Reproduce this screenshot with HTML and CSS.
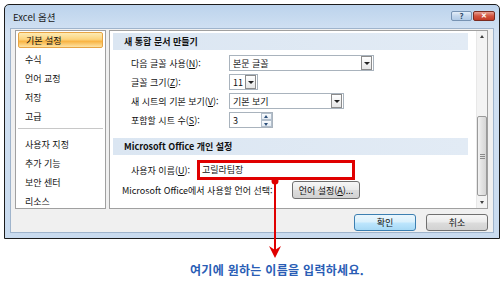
FILE: index.html
```html
<!DOCTYPE html>
<html lang="ko">
<head>
    <meta charset="UTF-8">
    <meta name="viewport" content="width=device-width, initial-scale=1.0">
    <title>Excel 옵션</title>
    <link rel="stylesheet" href="styles.css">
</head>
<body>

    <div class="dialog">
        <div class="titlebar">
            <span class="title">Excel 옵션</span>
            <div class="caption-buttons">
                <span class="cap-btn help">?</span>
                <span class="cap-btn close">✕</span>
            </div>
        </div>

        <div class="client">
            <div class="body-row">
                <ul class="nav">
                    <li class="active">기본 설정</li>
                    <li>수식</li>
                    <li>언어 교정</li>
                    <li>저장</li>
                    <li>고급</li>
                    <li class="sep"></li>
                    <li>사용자 지정</li>
                    <li>추가 기능</li>
                    <li>보안 센터</li>
                    <li>리소스</li>
                </ul>

                <div class="panel">
                    <div class="panel-content">
                        <div class="section-head">새 통합 문서 만들기</div>

                        <div class="row">
                            <span class="label">다음 글꼴 사용(<u>N</u>):</span>
                            <div class="combo combo-font"><span class="value">본문 글꼴</span><i class="drop"></i></div>
                        </div>
                        <div class="row">
                            <span class="label">글꼴 크기(<u>Z</u>):</span>
                            <div class="combo combo-size"><span class="value">11</span><i class="drop"></i></div>
                        </div>
                        <div class="row">
                            <span class="label">새 시트의 기본 보기(<u>V</u>):</span>
                            <div class="combo combo-view"><span class="value">기본 보기</span><i class="drop"></i></div>
                        </div>
                        <div class="row">
                            <span class="label">포함할 시트 수(<u>S</u>):</span>
                            <div class="spin"><span class="value">3</span>
                                <div class="spin-btns"><i class="up"></i><i class="down"></i></div>
                            </div>
                        </div>

                        <div class="section-head second">Microsoft Office 개인 설정</div>

                        <div class="row user-row">
                            <span class="label short">사용자 이름(<u>U</u>):</span>
                            <div class="name-input">고릴라팀장</div>
                        </div>
                        <div class="row lang-row">
                            <span class="lang-label">Microsoft Office에서 사용할 언어 선택:</span>
                            <button class="btn lang-btn">언어 설정(<u>A</u>)...</button>
                        </div>
                    </div>

                    <div class="scrollbar">
                        <i class="sb-arrow sb-up"></i>
                        <div class="sb-track"><div class="sb-thumb"><span class="grip"></span></div></div>
                        <i class="sb-arrow sb-down"></i>
                    </div>
                </div>
            </div>

            <div class="footer">
                <button class="btn default">확인</button>
                <button class="btn">취소</button>
            </div>
        </div>
    </div>

    <!-- callout arrow over the dialog -->
    <svg class="callout" width="504" height="281" viewBox="0 0 504 281">
        <line x1="275" y1="181" x2="275" y2="252" stroke="#e00000" stroke-width="2"/>
        <circle cx="275" cy="181" r="3.5" fill="#e00000"/>
        <polygon points="269,246 275,250 281,246 275,258" fill="#e00000"/>
    </svg>

    <p class="hint">여기에 원하는 이름을 입력하세요.</p>

</body>
</html>
```

FILE: styles.css
```css
/* Global */
* {
    margin: 0;
    padding: 0;
    box-sizing: border-box;
}

body {
    background: #ffffff;
    font-family: 'Noto Sans CJK KR', 'Noto Sans', sans-serif;
    font-size: 9px;
    color: #111111;
    position: relative;
    width: 504px;
    height: 281px;
    overflow: hidden;
}

u {
    text-decoration: underline;
    text-underline-offset: 1px;
}

/* Window frame */
.dialog {
    margin: 4px 0 0 4px;
    width: 496px;
    height: 235px;
    border: 1px solid #1c1c1c;
    border-radius: 5px 5px 0 0;
    background: linear-gradient(180deg, #bcd3ec 0%, #d3e2f3 12%, #c9dbef 100%);
    padding: 0 5px 5px 5px;
    display: flex;
    flex-direction: column;
}

.titlebar {
    height: 23px;
    display: flex;
    align-items: center;
    justify-content: space-between;
    padding: 0 0 0 3px;
}

.title {
    font-size: 9.5px;
    color: #1a1a1a;
    margin-top: 1px;
}

.caption-buttons {
    display: flex;
    gap: 1px;
    margin-top: -2px;
    margin-right: -1px;
}

.cap-btn {
    height: 10px;
    border-radius: 2px;
    display: flex;
    align-items: center;
    justify-content: center;
    font-size: 8px;
    font-weight: bold;
    line-height: 1;
}

.cap-btn.help {
    width: 21px;
    background: linear-gradient(180deg, #e4eef9 0%, #c4d7ec 50%, #b2cbe6 100%);
    border: 1px solid #7793b3;
    color: #2f4a6a;
}

.cap-btn.close {
    width: 22px;
    background: linear-gradient(180deg, #e8a093 0%, #d2533f 50%, #c23a26 100%);
    border: 1px solid #7a2b20;
    color: #ffffff;
    font-size: 7px;
}

/* Client area */
.client {
    flex: 1;
    background: #f0f0f0;
    border: 1px solid #9fb4cc;
    padding: 1px 5px 0 4px;
    display: flex;
    flex-direction: column;
}

.body-row {
    display: flex;
    gap: 3px;
    height: 179px;
}

/* Left navigation */
.nav {
    list-style: none;
    width: 91px;
    background: #ffffff;
    border: 1px solid #a0a0a0;
    padding: 1px 2px;
}

.nav li {
    height: 19px;
    line-height: 18px;
    padding-left: 7px;
}

.nav li.active {
    height: 16px;
    line-height: 15px;
    margin-bottom: 3px;
    background: linear-gradient(180deg, #fdebb4 0%, #fcd47e 45%, #f9b443 60%, #fde3a4 100%);
    border: 1px solid #e7a443;
    border-radius: 2px;
}

.nav li.sep {
    height: 1px;
    margin: 1px 0 7px 0;
    background: #c8c8c8;
}

/* Right panel */
.panel {
    width: 379px;
    background: #ffffff;
    border: 1px solid #a0a0a0;
    display: flex;
}

.panel-content {
    flex: 1;
    padding: 2px 8px 0 3px;
}

.section-head {
    height: 17px;
    line-height: 17px;
    padding-left: 11px;
    background: linear-gradient(90deg, #dbe6f2 0%, #e2ebf5 100%);
    font-weight: bold;
    margin-bottom: 5px;
}

.section-head.second {
    margin-top: 10px;
}

.row {
    display: flex;
    align-items: center;
    height: 16px;
    margin-bottom: 3px;
}

.label {
    width: 116px;
    padding-left: 18px;
    flex-shrink: 0;
}

.label.short {
    width: 84px;
}

.combo,
.spin {
    height: 16px;
    border: 1px solid #a9b3bd;
    background: #ffffff;
    display: flex;
    align-items: center;
    justify-content: space-between;
    padding: 0 1px 0 3px;
}

.combo-font { width: 145px; }
.combo-size { width: 29px; }
.combo-view { width: 115px; }

.drop {
    width: 11px;
    height: 14px;
    border: 1px solid #8c8c8c;
    background: linear-gradient(180deg, #ffffff 0%, #e6e6e6 100%);
    position: relative;
}

.drop::after {
    content: "";
    position: absolute;
    left: 2px;
    top: 5px;
    border-left: 3px solid transparent;
    border-right: 3px solid transparent;
    border-top: 3px solid #222222;
}

.spin {
    width: 44px;
    padding-right: 0;
}

.spin-btns {
    width: 11px;
    height: 14px;
    display: flex;
    flex-direction: column;
}

.spin-btns i {
    flex: 1;
    border: 1px solid #b3bfcc;
    background: linear-gradient(180deg, #fafcfe 0%, #e4ebf3 100%);
    position: relative;
}

.spin-btns i::after {
    content: "";
    position: absolute;
    left: 2px;
    top: 1px;
    border-left: 2.5px solid transparent;
    border-right: 2.5px solid transparent;
}

.spin-btns .up::after { border-bottom: 3px solid #2d4f7a; }
.spin-btns .down::after { border-top: 3px solid #2d4f7a; top: 2px; }

/* Red highlighted name field */
.user-row {
    height: 20px;
    margin-bottom: 1px;
}

.name-input {
    width: 158px;
    height: 20px;
    border: 3px solid #e00000;
    background: #ffffff;
    line-height: 14px;
    padding-left: 2px;
}

.lang-row {
    height: 18px;
}

.lang-label {
    padding-left: 9px;
    width: 179px;
    flex-shrink: 0;
}

/* Buttons */
.btn {
    font-family: 'Noto Sans CJK KR', sans-serif;
    font-size: 9px;
    color: #111111;
    height: 17px;
    border: 1px solid #707070;
    border-radius: 3px;
    background: linear-gradient(180deg, #f6f6f6 0%, #eaeaea 48%, #dcdcdc 52%, #d2d2d2 100%);
}

.lang-btn {
    width: 68px;
    height: 18px;
}

.footer {
    display: flex;
    justify-content: flex-end;
    gap: 10px;
    margin-top: 5px;
}

.footer .btn {
    width: 62px;
}

.btn.default {
    border-color: #3c7fb1;
    background: linear-gradient(180deg, #eaf6fd 0%, #d9f0fc 48%, #bee6fd 52%, #a7d9f5 100%);
}

/* Scrollbar */
.scrollbar {
    width: 11px;
    display: flex;
    flex-direction: column;
    background: #f3f3f3;
    border-left: 1px solid #e8e8e8;
}

.sb-arrow {
    height: 11px;
    position: relative;
}

.sb-arrow::after {
    content: "";
    position: absolute;
    left: 3px;
    border-left: 2px solid transparent;
    border-right: 2px solid transparent;
}

.sb-up::after { top: 4px; border-bottom: 3px solid #404040; }
.sb-down::after { top: 4px; border-top: 3px solid #404040; }

.sb-track {
    flex: 1;
    display: flex;
    flex-direction: column;
    justify-content: flex-end;
    padding-bottom: 1px;
}

.sb-thumb {
    height: 80px;
    border: 1px solid #9a9a9a;
    border-radius: 2px;
    background: linear-gradient(90deg, #f2f2f2 0%, #e2e2e2 50%, #d6d6d6 100%);
    display: flex;
    align-items: center;
    justify-content: center;
}

.grip {
    width: 5px;
    height: 5px;
    border-top: 1px solid #8a8a8a;
    border-bottom: 1px solid #8a8a8a;
    position: relative;
}

.grip::after {
    content: "";
    position: absolute;
    left: 0;
    right: 0;
    top: 1px;
    border-top: 1px solid #8a8a8a;
}

/* Callout */
.callout {
    position: absolute;
    left: 0;
    top: 0;
    pointer-events: none;
}

.hint {
    margin: 23px 0 0 190px;
    font-size: 12px;
    font-weight: bold;
    letter-spacing: 0.3px;
    line-height: 15px;
    color: #2a5db5;
}
```
